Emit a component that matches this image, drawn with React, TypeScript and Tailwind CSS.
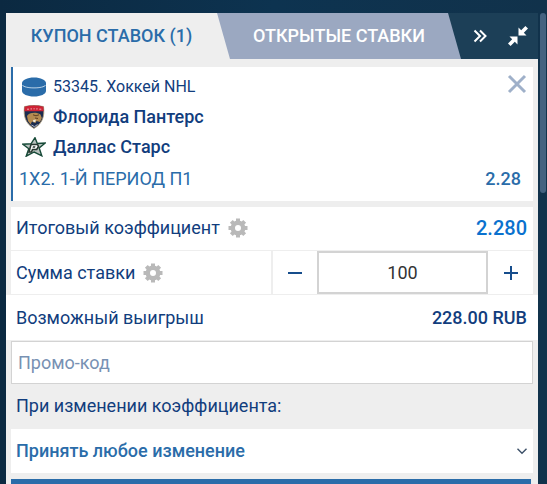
import type { ReactNode } from "react";

function PuckIcon() {
  return (
    <svg width="24" height="20" viewBox="0 0 24 20" fill="none">
      <path d="M0 6v8c0 3 5.4 5.500 12 5.500S24 17 24 14V6c0-3-5.400-5.500-12-5.500S0 3 0 6z" fill="#2a6ca9" />
      <path d="M0.300 8c1.200 1.900 6 2.900 11.700 2.900S22.500 9.900 23.700 8" stroke="#c9dcec" strokeWidth="0.900" />
    </svg>
  );
}

function PanthersIcon() {
  return (
    <svg width="22" height="24" viewBox="0 0 22 24">
      <path d="M1.500 1.500Q11 -1 20.500 1.500C21.700 11 20 18 11 23.500C2 18 0.300 11 1.500 1.500z" fill="#1b2c4f" stroke="#b7a37c" strokeWidth="0.800" />
      <path d="M1.600 1.700Q11 -0.800 20.400 1.700L20.600 6.200H1.400z" fill="#cf2235" />
      <path d="M4 4.200h2M7.500 3.900h1.500M10.500 3.800h1.200M13.200 3.900h1.500M16.300 4.200h2" stroke="#e9aeb2" strokeWidth="1" />
      <path d="M4 11C6 7 14 6.800 17.500 9.500L18.800 13L17 17L13.500 16L12.500 18L9 16.500L7.500 19.500L5 16z" fill="#b58b50" />
      <path d="M10 9.800l3 1 3-1M12 13l3 .5" stroke="#56371f" strokeWidth="0.900" fill="none" />
      <path d="M10 15l3-.5-.8 2.500-1.700.2z" fill="#f2ead8" />
      <path d="M8.500 20l3 1.700 3-2.200" stroke="#e3e3e6" strokeWidth="0.800" fill="none" />
    </svg>
  );
}

function StarsIcon() {
  return (
    <svg width="24" height="20" viewBox="0 0 24 20">
      <path
        d="M13 0.700L15.300 6.500L23.200 6L17.200 11L19.800 18.800L12.200 15L4.200 19.200L6.800 11.800L0.800 7.200L9 6.800z"
        fill="#b9c2bf"
        stroke="#174a38"
        strokeWidth="1.400"
      />
      <path d="M9 7.500h6.500l1 2-1.800 3H10.500l-1 2.500H7z" fill="#fff" stroke="#26372f" strokeWidth="1.600" />
      <path d="M11 9.300h2.500l-.5 1.500h-2.500z" fill="#26372f" />
    </svg>
  );
}

function GearIcon() {
  return (
    <svg width="20" height="20" viewBox="0 0 20 20" fill="none" stroke="#b9b9b9">
      <circle cx="10" cy="10" r="5.200" strokeWidth="4.400" />
      <path
        d="M10 .5v3M10 16.500v3M.5 10h3M16.500 10h3M3.300 3.300l2.100 2.100M14.600 14.600l2.100 2.100M3.300 16.700l2.100-2.100M14.600 5.400l2.100-2.100"
        strokeWidth="4"
      />
    </svg>
  );
}

function CollapseIcon() {
  return (
    <svg width="20" height="20" viewBox="0 0 20 20" fill="#fff">
      <path d="M10.500 1.500V9.500H18.500l-2.700-2.700L20 2.600 17.400 0l-4.200 4.200z" />
      <path d="M9.500 18.500V10.500H1.500l2.700 2.700L0 17.400 2.600 20l4.200-4.200z" />
    </svg>
  );
}

function Team({ icon, name }: { icon: ReactNode; name: string }) {
  return (
    <div className="flex h-[30px] items-center">
      <span className="mr-[7px] ml-[3px] flex w-6 justify-center">{icon}</span>
      <span className="font-medium">{name}</span>
    </div>
  );
}

export default function App() {
  return (
    <div className="flex h-screen overflow-hidden bg-gradient-to-r from-[#0b2941] via-[#0d3350] to-[#11324b] pt-[13px] pl-[6px] font-[Roboto,sans-serif] text-lg text-[#113d7d]">
      <main className="min-w-0 flex-1 bg-[#eee]">
        <nav className="flex h-[46px] bg-[#1c3f57]">
          <button className="-mr-[14px] flex-1 bg-[#eee] pr-[14px] font-medium whitespace-nowrap text-[#2a6ca9]">
            КУПОН СТАВОК (1)
          </button>
          <button className="w-[244px] bg-[#9ba8c1] font-medium text-white [clip-path:polygon(0_0,calc(100%-13px)_0,100%_100%,13px_100%)]">
            ОТКРЫТЫЕ СТАВКИ
          </button>
          <div className="flex w-[77px] items-center justify-between pr-[10px] pl-3">
            <button aria-label="Свернуть вправо">
              <svg width="14" height="14" viewBox="0 0 14 14" fill="none" stroke="#fff" strokeWidth="2">
                <path d="M1.500 1.500L7 7l-5.500 5.500M7 1.500L12.500 7 7 12.500" />
              </svg>
            </button>
            <button aria-label="Уменьшить">
              <CollapseIcon />
            </button>
          </div>
        </nav>

        {/* Bet */}
        <section className="mx-[5px] mt-2 flex h-[134px] border-l-2 border-[#2a6ca9] bg-white px-[6px] pt-[5px]">
          <div className="flex-1">
            <div className="flex h-[30px] items-center">
              <span className="mr-[7px] ml-[3px]">
                <PuckIcon />
              </span>
              <span className="text-base">53345. Хоккей NHL</span>
            </div>
            <Team icon={<PanthersIcon />} name="Флорида Пантерс" />
            <Team icon={<StarsIcon />} name="Даллас Старс" />
            <div className="flex h-[34px] items-center text-[#2a6ca9]">1X2. 1-Й ПЕРИОД П1</div>
          </div>
          <div className="flex flex-col items-end justify-between">
            <button aria-label="Удалить" className="pt-[2px]">
              <svg width="20" height="20" viewBox="0 0 20 20" stroke="#9fb0c9" strokeWidth="3">
                <path d="M2 2l16 16M18 2L2 18" />
              </svg>
            </button>
            <span className="mr-[6px] mb-[5px] flex h-[34px] items-center font-medium text-[#2a6ca9]">2.28</span>
          </div>
        </section>

        {/* Totals and stake */}
        <section className="mt-[6px]">
          <div className="mx-[5px] flex h-[43px] items-center bg-white pr-[6px] pb-[2px] pl-[5px]">
            <span>Итоговый коэффициент</span>
            <button aria-label="Настройки коэффициента" className="ml-2">
              <GearIcon />
            </button>
            <span className="ml-auto text-xl font-medium text-[#0a71ce]">2.280</span>
          </div>
          <div className="mx-[5px] mt-px flex h-[43px]">
            <div className="mr-[2px] flex w-[260px] shrink-0 items-center bg-white pl-[5px]">
              <label htmlFor="stake">Сумма ставки</label>
              <button aria-label="Настройки ставки" className="ml-2">
                <GearIcon />
              </button>
            </div>
            <div className="flex min-w-0 flex-1 bg-white">
              <button aria-label="Меньше" className="flex w-11 items-center justify-center">
                <span className="h-[2px] w-[14px] bg-[#164d8c]" />
              </button>
              <input
                id="stake"
                defaultValue="100"
                className="min-w-0 flex-1 border-2 border-[#d3d3d3] text-center text-[#333] outline-none"
              />
              <button aria-label="Больше" className="flex w-[45px] items-center justify-center">
                <svg width="14" height="14" viewBox="0 0 14 14" stroke="#164d8c" strokeWidth="2">
                  <path d="M0 7h14M7 0v14" />
                </svg>
              </button>
            </div>
          </div>
          <div className="mt-px flex h-[45px] items-center justify-between bg-white pr-[11px] pl-[10px]">
            <span>Возможный выигрыш</span>
            <span className="font-medium">228.00 RUB</span>
          </div>
        </section>

        <form className="mx-[5px] mt-px">
          <input
            aria-label="Промо-код"
            placeholder="Промо-код"
            className="block h-[43px] w-full border border-[#d3d3d3] bg-white px-[6px] outline-none placeholder:text-[#7891b3]"
          />
          <label htmlFor="change" className="flex h-[45px] items-center px-[5px] pb-[2px]">
            При изменении коэффициента:
          </label>
          <div className="relative">
            <select
              id="change"
              className="h-11 w-full appearance-none bg-white px-[5px] font-medium text-[#2a6ca9] outline-none"
            >
              <option>Принять любое изменение</option>
            </select>
            <svg
              className="pointer-events-none absolute top-[19px] right-[6px]"
              width="10"
              height="7"
              viewBox="0 0 10 7"
              fill="none"
              stroke="#3c5068"
              strokeWidth="1.400"
            >
              <path d="M0.500 0.800L5 5.300l4.500-4.500" />
            </svg>
          </div>
          <button type="button" aria-label="Сделать ставку" className="mt-[6px] block h-11 w-[calc(100%-2px)] bg-[#2a6ca9]" />
        </form>
      </main>
      <div className="w-[9px] pl-[2px]">
        <div className="h-[180px] w-[6px] rounded-full bg-[#446280]" />
      </div>
    </div>
  );
}
